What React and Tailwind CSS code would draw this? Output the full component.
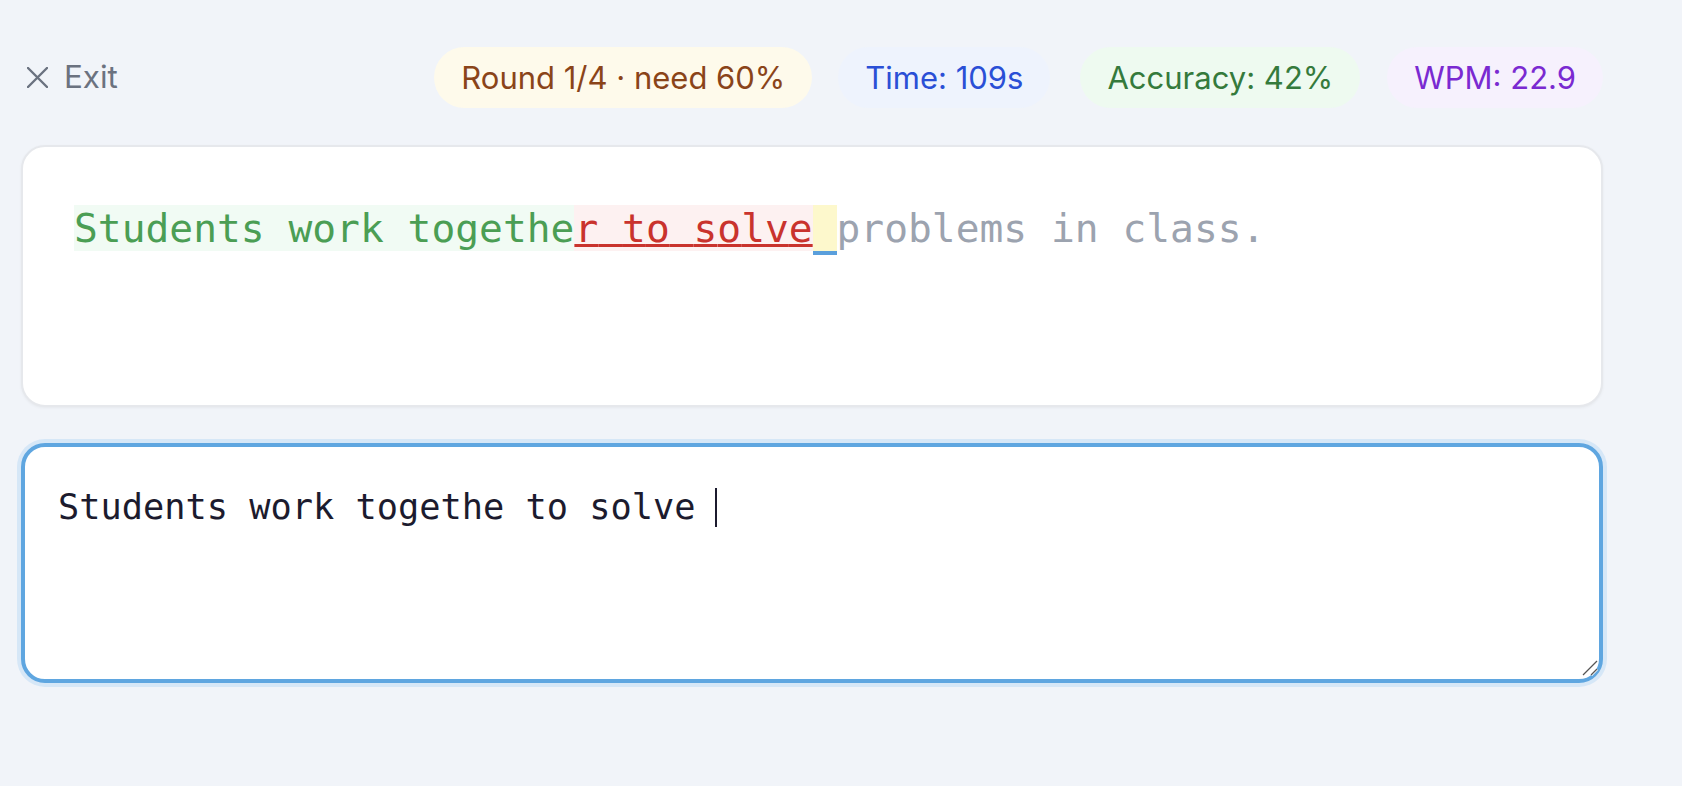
import React from "react";

const greenPart = "Students work togethe";
const redPart = "r to solve";
const current = " ";
const rest = "problems in class.";

function Pill({ className, children }) {
  return (
    <div
      className={
        "rounded-full px-[27px] py-[7px] text-[31px] leading-[47px] whitespace-nowrap " +
        className
      }
    >
      {children}
    </div>
  );
}

export default function App() {
  const mono = { fontFamily: '"DejaVu Sans Mono", "Liberation Mono", monospace' };
  return (
    <div
      className="min-h-screen bg-[#f1f4f9]"
      style={{ fontFamily: 'Inter, "Noto Sans", sans-serif' }}
    >
      <div className="ml-[21px] w-[1582px] pt-[47px]">
        {/* header */}
        <div className="flex items-center justify-between">
          <button className="flex items-center gap-[16px] pl-[6px] text-[31.4px] leading-[47px] text-[#6b7280]">
            <svg width="21" height="21" viewBox="0 0 21 21" fill="none">
              <path d="M1 1L20 20M20 1L1 20" stroke="#6b7280" strokeWidth="2.4" strokeLinecap="round" />
            </svg>
            <span>Exit</span>
          </button>
          <div className="flex items-center">
            <Pill className="bg-[#fefaeb] text-[#8a4419]">Round 1/4 · need 60%</Pill>
            <Pill className="ml-[26px] bg-[#eef3fd] text-[#2a4fd6]">Time: 109s</Pill>
            <Pill className="ml-[30px] bg-[#eefaf0] text-[#357a3c]">Accuracy: 42%</Pill>
            <Pill className="ml-[27px] bg-[#f6f1fd] text-[#7a2ad1]">WPM: 22.9</Pill>
          </div>
        </div>

        {/* prompt card */}
        <div className="mt-[37px] min-h-[262px] rounded-[24px] border-2 border-[#e6e8ec] bg-white px-[51px] py-[50px] shadow-[0_1px_3px_rgba(0,0,0,0.05)]">
          <div className="text-[39.6px] leading-[1.6] whitespace-pre" style={mono}>
            <span className="bg-[#f1fbf4] text-[#4b9e54]">{greenPart}</span>
            {redPart.split("").map((c, i) => (
              <span
                key={i}
                className="bg-[#fdf1f1] text-[#c9332d] underline decoration-[#c9332d] decoration-[3px]"
              >
                {c}
              </span>
            ))}
            <span className="bg-[#fdf8cc] border-b-4 border-[#5a9fdc]">{current}</span>
            <span className="text-[#9ca3af]">{rest}</span>
          </div>
        </div>

        {/* input */}
        <div className="relative mt-[36px]">
          <textarea
            readOnly
            value="Students work togethe to solve "
            className="block h-[240px] w-full resize-none rounded-[24px] border-4 border-[#5fa6e0] bg-white pt-[34px] pl-[33px] pr-[35px] text-[35.3px] leading-[1.5] text-[#1c1b2e] shadow-[0_0_0_4px_#d6e7f7] outline-none"
            style={mono}
          />
          <span className="pointer-events-none absolute left-[694px] top-[45px] h-[39px] w-[2px] bg-[#1c1b2e]" />
          <svg
            className="pointer-events-none absolute right-[5px] bottom-[7px]"
            width="16"
            height="16"
            viewBox="0 0 16 16"
            fill="none"
          >
            <path d="M1 15L15 1" stroke="#ffffff" strokeWidth="3" />
            <path d="M9 15L15 9" stroke="#ffffff" strokeWidth="3" />
            <path d="M1 15L15 1" stroke="#555555" strokeWidth="1.2" />
            <path d="M9 15L15 9" stroke="#555555" strokeWidth="1.2" />
          </svg>
        </div>
      </div>
    </div>
  );
}
